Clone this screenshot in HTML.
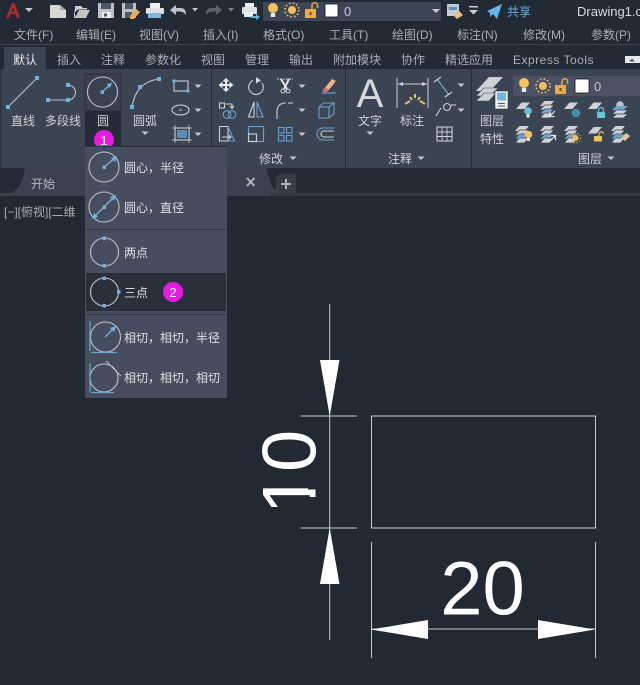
<!DOCTYPE html>
<html><head><meta charset="utf-8"><style>
html,body{margin:0;padding:0;background:#222933;width:640px;height:685px;overflow:hidden}
svg{display:block}
text{font-family:"Liberation Sans","Noto Sans CJK SC",sans-serif}
.m{font-size:12px;fill:#a9afb9}
.t{font-size:12px;fill:#a9afb9}
.l{font-size:12px;fill:#d0d3d8}
.d{font-size:12px;fill:#dfe1e5}
.s{fill:#6fb2de}
.c{fill:none;stroke:#bfc3ca;stroke-width:1.1}
.b{fill:none;stroke:#6aa3cd;stroke-width:1.1}
.w{fill:none;stroke:#cfd2d7;stroke-width:1.1}
</style></head><body>
<svg width="640" height="685" viewBox="0 0 640 685" xmlns="http://www.w3.org/2000/svg">
<defs>
<g id="arr"><path d="M-3.500 -1.500H3.500L0 2Z" fill="#c4c8ce"/></g>
<g id="bulb"><circle cx="0" cy="-2" r="5" fill="#f4c35c"/><rect x="-2.200" y="3" width="4.400" height="4" fill="#e8e8e8"/></g>
<g id="sun"><circle r="4" fill="#f1be5d"/><circle r="7" fill="none" stroke="#f1be5d" stroke-width="1.600" stroke-dasharray="1.600 2.100"/></g>
<g id="lock"><rect x="-6" y="-2" width="11" height="9" fill="#eaaa45"/><path d="M1 -2V-5.500a2.800 2.800 0 0 1 5.600 0V-3" fill="none" stroke="#eaaa45" stroke-width="1.500"/><rect x="-1.500" y="1" width="2" height="3" fill="#5a5040"/></g>
<g id="sheet"><path d="M-7 3.500L-1.500 -3H7L1.500 3.500Z" fill="#cfd1d4"/></g>
<g id="stk"><path d="M-7 -3L-2.500 -8H7L2.500 -3Z" fill="#d2d4d7"/><path d="M-7 1L-2.500 -4H7L2.500 1Z" fill="#d2d4d7" stroke="#3b4453" stroke-width=".7"/><path d="M-7 5L-2.500 0H7L2.500 5Z" fill="#6fabd8" stroke="#3b4453" stroke-width=".7"/><path d="M-7 9L-2.500 4H7L2.500 9Z" fill="#d2d4d7" stroke="#3b4453" stroke-width=".7"/></g>
<g id="stkb"><path d="M-8 -3L-3.500 -7H8L3.500 -3Z" fill="#6fabd8"/><path d="M-8 1L-3.500 -3H8L3.500 1Z" fill="#d2d4d7" stroke="#3b4453" stroke-width=".7"/><path d="M-8 5L-3.500 1H8L3.500 5Z" fill="#d2d4d7" stroke="#3b4453" stroke-width=".7"/></g>
</defs>

<!-- top bars -->
<rect width="640" height="22" fill="#222a36"/>
<rect y="22" width="640" height="22" fill="#232a36"/>
<rect y="44" width="640" height="1.200" fill="#3b4350"/>
<rect y="45" width="640" height="24" fill="#222a36"/>

<!-- quick access -->
<path d="M6 18L12 3H14.500L20 18H17L15.500 14H10.500L9 18ZM11.500 11.500H14.500L13 7.500Z" fill="#aa2c2f"/>
<path d="M25 8H33L29 12Z" fill="#c4c8ce"/>
<path d="M50 5H60L66 10V18H50Z" fill="#d8d8d2"/><path d="M60 5V10H66" fill="#a9a9a4"/>
<path d="M74 8V18H86L90 10H79L75.500 17" fill="#c6c6c0"/><path d="M75 10V6H81L83 8H87V9.500H78L75 12Z" fill="#cfcfca"/>
<path d="M98 3H114V18H98Z" fill="#bcc2c8"/><rect x="101" y="3" width="10" height="6" fill="#4f5765"/><rect x="102" y="12" width="9" height="6" fill="#eceded"/><rect x="104" y="13.500" width="3" height="3" fill="#555"/>
<path d="M122 3H136V18H122Z" fill="#bcc2c8"/><rect x="125" y="3" width="8" height="6" fill="#4f5765"/><rect x="125" y="12" width="7" height="6" fill="#4f5765"/><path d="M130 16L136 9L140 12L134 19H130Z" fill="#e9b05a"/>
<rect x="150" y="3" width="10" height="6" fill="#f0f0f0"/><rect x="146" y="8" width="18" height="6" rx="1" fill="#dfe0e2"/><rect x="148" y="13" width="13" height="5" fill="#7ab8e2"/>
<path d="M170 10L176 5V8H181Q186 8 186 15Q183 11 179 11.500H176V15Z" fill="#bfc2c7"/>
<path d="M192 8H198L195 11.500Z" fill="#bfc2c7"/>
<path d="M222 10L216 5V8H211Q206 8 206 15Q209 11 213 11.500H216V15Z" fill="#5b626e"/>
<path d="M228 8H234L231 11.500Z" fill="#7d838d"/>
<rect x="245" y="3" width="9" height="5" fill="#eee"/><rect x="242" y="7" width="15" height="7" rx="1" fill="#dfe0e2"/><rect x="244" y="12" width="9" height="5" fill="#eee"/><path d="M250 16H256V14L260 17L256 20V18H250Z" fill="#6fb2de"/>

<!-- layer combo top -->
<rect x="263" y="2" width="178" height="19" fill="#3d4657"/>
<use href="#bulb" x="273" y="10"/>
<use href="#sun" x="292" y="10"/>
<use href="#lock" x="311" y="11"/>
<rect x="325" y="4" width="13" height="13" fill="#fff" stroke="#111" stroke-width=".8"/>
<text x="344" y="16" font-size="13" fill="#c4c8ce">0</text>
<path d="M432 9H440L436 13Z" fill="#c9cdd2"/>

<rect x="447" y="4" width="12" height="12" fill="#c5cbd2"/><rect x="449" y="7" width="8" height="3" fill="#5b8db5"/><path d="M453 15L459 11L463 15L457 19Z" fill="#ecc37c"/>
<rect x="469" y="6" width="9" height="1.500" fill="#c9cdd2"/><path d="M469 10H478L473.500 14.500Z" fill="#c9cdd2"/>
<path d="M487 11L502 4L497 19L493 14L490 17V13Z" fill="#67b4e8"/>
<text x="507" y="16" font-size="12" fill="#67b4e8">共享</text>
<text x="577" y="16" font-size="13" fill="#d8dade">Drawing1.c</text>

<!-- menu -->
<text class="m" x="14" y="39">文件(F)</text>
<text class="m" x="76" y="39">编辑(E)</text>
<text class="m" x="139" y="39">视图(V)</text>
<text class="m" x="203" y="39">插入(I)</text>
<text class="m" x="263" y="39">格式(O)</text>
<text class="m" x="329" y="39">工具(T)</text>
<text class="m" x="392" y="39">绘图(D)</text>
<text class="m" x="457" y="39">标注(N)</text>
<text class="m" x="523" y="39">修改(M)</text>
<text class="m" x="591" y="39">参数(P)</text>

<!-- ribbon tabs -->
<rect x="4" y="47" width="42" height="23" fill="#3b4453"/>
<text x="13" y="64" font-size="12" fill="#e8eaed">默认</text>
<text class="t" x="57" y="64">插入</text>
<text class="t" x="101" y="64">注释</text>
<text class="t" x="145" y="64">参数化</text>
<text class="t" x="201" y="64">视图</text>
<text class="t" x="245" y="64">管理</text>
<text class="t" x="289" y="64">输出</text>
<text class="t" x="333" y="64">附加模块</text>
<text class="t" x="401" y="64">协作</text>
<text class="t" x="445" y="64">精选应用</text>
<text class="t" x="513" y="64" letter-spacing=".5">Express Tools</text>
<rect x="625" y="56" width="15" height="7" fill="#e8e8e8"/><path d="M629 61.500L632 58.500L635 61.500Z" fill="#555"/>

<!-- ribbon -->
<rect x="0" y="69" width="640" height="99" fill="#3b4453"/>
<rect x="0" y="69" width="1.500" height="99" fill="#2a313c"/>
<rect x="211" y="69" width="1" height="99" fill="#272e39"/>
<rect x="345" y="69" width="1" height="99" fill="#272e39"/>
<rect x="471" y="69" width="1" height="99" fill="#272e39"/>

<!-- line -->
<path d="M8 107L37 78" class="c"/><rect x="6" y="105" width="4" height="4" class="s"/><rect x="35" y="76" width="4" height="4" class="s"/>
<text class="l" x="11" y="125">直线</text>
<!-- polyline -->
<path d="M48 100H68A7.500 7.500 0 0 0 68 85" class="c"/>
<rect x="46" y="98" width="4" height="4" class="s"/><rect x="66" y="98" width="4" height="4" class="s"/><rect x="66" y="83" width="4" height="4" class="s"/>
<text class="l" x="45" y="125">多段线</text>
<!-- circle active -->
<rect x="85" y="74" width="36" height="37" fill="#39414f" stroke="#2a303b"/>
<rect x="85" y="111" width="36" height="36" fill="#262c37"/>
<circle cx="102.500" cy="92" r="15" class="c"/>
<path d="M102 92L111 84" stroke="#74b4e0" stroke-width="1.300"/><path d="M112 82.500L106.500 84.500L110 88Z" fill="#74b4e0"/><rect x="100.500" y="90.500" width="3.500" height="3.500" class="s"/>
<text class="l" x="97" y="125">圆</text>
<circle cx="104" cy="140" r="10" fill="#e61ae0"/>
<text x="104" y="145" font-size="13" fill="#fff" text-anchor="middle">1</text>
<!-- arc -->
<path d="M132 107Q136 82 159 79" class="c"/>
<rect x="130" y="105" width="4" height="4" class="s"/><rect x="138" y="85" width="4" height="4" class="s"/><rect x="157" y="77" width="4" height="4" class="s"/>
<text class="l" x="133" y="125">圆弧</text>
<use href="#arr" x="145" y="133"/>
<!-- rect, ellipse, hatch -->
<rect x="174" y="81" width="14" height="10" class="w"/><rect x="172.500" y="79.500" width="3" height="3" class="s"/><rect x="186.500" y="89.500" width="3" height="3" class="s"/>
<use href="#arr" x="198" y="86"/>
<ellipse cx="180.500" cy="110" rx="8.500" ry="5" class="w"/><rect x="179.500" y="109" width="2" height="2" class="s"/>
<use href="#arr" x="198" y="110"/>
<rect x="175" y="128" width="14" height="12" class="w"/><rect x="177" y="130" width="10" height="8" fill="#5f8cb3"/>
<path d="M172 128H192M172 140H192M175 125V143M189 125V143" stroke="#cfd2d7" stroke-width=".8"/>
<use href="#arr" x="198" y="134"/>

<!-- modify -->
<path d="M226 78L229.500 81.500H227V84H229.500V81.800L233.500 85L229.500 88.200V86H227V88.500H229.500L226 92L222.500 88.500H225V86H222.500V88.200L218.500 85L222.500 81.800V84H225V81.500H222.500Z" fill="#e9eaec"/>
<path d="M253 80.500A7.300 7.300 0 1 0 262 83" class="w"/><path d="M256 77L261 80.500L256 83.500Z" fill="#d5d8dc"/>
<path d="M277 79H293" stroke="#cfd2d7" stroke-dasharray="2 1"/><path d="M281 79L287 89M289 79L284 89" stroke="#e2e4e6" stroke-width="2"/><circle cx="283" cy="91" r="2" class="w"/><circle cx="288" cy="91" r="2" class="w"/>
<use href="#arr" x="302" y="86"/>
<path d="M324 89L332 79L336 81L328 91Z" fill="#e9b889"/><path d="M322 91L325 87L329 90L326 92.500Z" fill="#d96a72"/><path d="M322 93H336" stroke="#70b4de"/>

<rect x="219.500" y="103" width="5" height="5" class="w"/><path d="M226 104H232V108M230 106L232 108.500L234 106" class="w"/><circle cx="227" cy="114.500" r="3.800" class="b"/><circle cx="232" cy="114.500" r="3.800" class="b"/>
<path d="M254 102V117H248.500Z" class="w"/><path d="M257 102L263 117H257Z" class="b"/>
<path d="M277 119V112Q277 103 286 103" class="w"/><path d="M288 103H293" class="w"/>
<use href="#arr" x="302" y="110"/>
<path d="M319 107H329V118H319ZM319 107L323.500 103H334V113.500L329 118M329 107L334 103" class="b"/>

<path d="M219.500 126.500H228V141H219.500Z" class="w"/><path d="M228 126.500L234.500 141H228" class="b"/><path d="M222 137H231M229 135L231 137L229 139" class="w"/>
<rect x="248.500" y="126.500" width="15" height="15" class="b"/><rect x="248.500" y="134" width="8" height="7.500" class="w"/>
<rect x="278.500" y="127.500" width="5.500" height="5.500" class="b"/><rect x="286.500" y="127.500" width="5.500" height="5.500" class="b"/><rect x="278.500" y="135.500" width="5.500" height="5.500" class="b"/><rect x="286.500" y="135.500" width="5.500" height="5.500" class="b"/>
<use href="#arr" x="302" y="134"/>
<path d="M334 128H323A6 6 0 0 0 323 140H334" class="b"/><path d="M334 131H324A3 3 0 0 0 324 137H334" class="w"/>

<text class="l" x="259" y="163">修改</text><use href="#arr" x="293" y="158"/>

<!-- annotation -->
<text x="370" y="107" font-size="40" fill="#d7d9dc" text-anchor="middle">A</text>
<text class="l" x="358" y="125">文字</text><use href="#arr" x="370" y="133"/>
<path d="M397 78V108M428 78V108M398 84H427" stroke="#cfd2d7"/>
<path d="M398 84L403 82V86ZM427 84L422 82V86Z" fill="#cfd2d7"/>
<path d="M405 104L410 101M420 101L425 104M410 97L412 100M420 97L418 100M415 94V98" stroke="#e5c168" stroke-width="2"/>
<text class="l" x="400" y="125">标注</text>
<path d="M437 79L449 95" stroke="#8ab9da"/><path d="M434 82L441 77M445 97L452 92" class="w"/>
<use href="#arr" x="461" y="85"/>
<path d="M436 116L441 108" class="w"/><circle cx="447" cy="107" r="3.500" class="w"/><path d="M451 105H456" class="w"/>
<use href="#arr" x="461" y="110"/>
<rect x="437" y="127" width="15" height="14" class="w"/><path d="M437 132H452M437 136.500H452M442 127V141M447 127V141" stroke="#cfd2d7" stroke-width=".9"/>

<text class="l" x="388" y="163">注释</text><use href="#arr" x="421" y="158"/>

<!-- layers -->
<path d="M476 91L489 77H503L490 91Z" fill="#cfd1d4"/>
<path d="M476 96L484 88H498L490 96Z" fill="#cfd1d4" stroke="#3b4453" stroke-width=".6"/>
<path d="M476 101L484 93H496L489 101Z" fill="#cfd1d4" stroke="#3b4453" stroke-width=".6"/>
<rect x="495" y="91" width="13" height="18" fill="#eef0f2" stroke="#2a303b" stroke-width=".5"/><rect x="497" y="92.500" width="9" height="8" fill="#6fb5e6"/>
<path d="M498 103.500H505M498 106H505" stroke="#555" stroke-width=".9"/>
<text class="l" x="480" y="125">图层</text>
<text class="l" x="480" y="143">特性</text>

<rect x="513" y="76" width="127" height="20" fill="#4a5263"/>
<use href="#bulb" x="524" y="85"/>
<use href="#sun" x="543" y="86"/>
<use href="#lock" x="561" y="87"/>
<rect x="575" y="79" width="14" height="14" fill="#fff" stroke="#111" stroke-width=".8"/>
<text x="594" y="91" font-size="13" fill="#c4c8ce">0</text>

<!-- layer row 1 -->
<use href="#sheet" x="523" y="105.500"/><circle cx="528" cy="111" r="3.800" fill="#63c4da"/><rect x="526.500" y="114.500" width="3" height="3" fill="#eee"/>
<use href="#stk" x="547" y="109"/><path d="M550 116L555 111M550 112V116.500H554.500" stroke="#e8e8e8" fill="none" stroke-width="1.200"/>
<use href="#sheet" x="571" y="105.500"/><circle cx="576" cy="113" r="4" fill="#4a9fb8"/><path d="M572 113H580M576 109V117M573 110L579 116M579 110L573 116" stroke="#2f7a92" stroke-width=".6"/>
<use href="#sheet" x="595" y="105.500"/><rect x="597" y="112" width="8" height="6" fill="#63c4da"/><path d="M598.500 112V110A2.500 2.500 0 0 1 603.500 110V112" fill="none" stroke="#63c4da" stroke-width="1.200"/>
<circle cx="620" cy="105" r="3.800" fill="#bfc3c9"/><use href="#stkb" x="620" y="113"/>

<!-- layer row 2 -->
<use href="#stk" x="522" y="134"/><circle cx="528.500" cy="134.500" r="3.800" fill="#f4c35c"/><rect x="527" y="138" width="3" height="3" fill="#eee"/>
<use href="#stk" x="547" y="134"/><path d="M550 141L555 136M551 135.500H555.500V140" stroke="#e8e8e8" fill="none" stroke-width="1.200"/>
<use href="#stk" x="571" y="134"/><circle cx="575.500" cy="138" r="3" fill="#f1be5d"/><circle cx="575.500" cy="138" r="5" fill="none" stroke="#f1be5d" stroke-dasharray="1.200 1.600"/>
<use href="#sheet" x="595" y="130"/><rect x="594" y="136" width="8" height="5.500" fill="#eec354"/><path d="M599 136V134A2.200 2.200 0 0 1 603.500 134" fill="none" stroke="#eec354" stroke-width="1.200"/>
<use href="#stk" x="618" y="134"/><path d="M621 138L626 133L630 136L625 141Z" fill="#eac79a"/>

<text class="l" x="578" y="163">图层</text><use href="#arr" x="611" y="158"/>

<!-- doc tabs -->
<rect y="168" width="640" height="28" fill="#3a414f"/>
<rect x="270" y="193" width="370" height="3" fill="#333a47"/>
<path d="M0 168H25Q22 188 12 193H0Z" fill="#252b36"/>
<path d="M266 168H640V193H284Q272 193 270 180Z" fill="#252b36"/>
<path d="M276 193V180Q276 174 282 174H296V193Z" fill="#363d4a"/>
<text x="31" y="188" font-size="12" fill="#b4b8bf">开始</text>
<path d="M247 178L254.500 186M254.500 178L247 186" stroke="#b0b4bb" stroke-width="2"/>
<path d="M281 184H291M286 179V189" stroke="#b0b4bb" stroke-width="2"/>

<text x="4" y="216" font-size="12" fill="#a8acb2">[−][俯视][二维</text>

<!-- dropdown -->
<rect x="85" y="146" width="142" height="252" fill="#464d5e"/>
<rect x="85" y="146" width="142" height="1" fill="#2b313c"/>
<rect x="86" y="229" width="140" height="1" fill="#303643"/>
<rect x="86" y="273" width="140" height="38" fill="#2a303b"/>
<rect x="86" y="314" width="140" height="1" fill="#303643"/>

<circle cx="104" cy="167" r="15" class="c"/><path d="M104 167L115 158" stroke="#74b4e0" stroke-width="1.300"/><path d="M117 156L111 158L115 162Z" fill="#74b4e0"/><rect x="102.500" y="165.500" width="3.500" height="3.500" class="s"/>
<text class="d" x="124" y="172">圆心，半径</text>
<circle cx="104" cy="207" r="15" class="c"/><path d="M94 217L114 197" stroke="#74b4e0" stroke-width="1.300"/><path d="M116 195L110 197L114 201ZM92 219L98 217L94 213Z" fill="#74b4e0"/><rect x="102.500" y="205.500" width="3.500" height="3.500" class="s"/>
<text class="d" x="124" y="212">圆心，直径</text>
<circle cx="104.500" cy="252" r="14" class="c"/><rect x="102.500" y="236.500" width="3.500" height="3.500" class="s"/><rect x="102.500" y="264" width="3.500" height="3.500" class="s"/>
<text class="d" x="124" y="257">两点</text>
<circle cx="104.500" cy="292" r="14" class="c"/><rect x="102.500" y="276.500" width="3.500" height="3.500" class="s"/><rect x="102.500" y="304" width="3.500" height="3.500" class="s"/><rect x="117" y="290" width="3.500" height="3.500" class="s"/>
<text class="d" x="124" y="297">三点</text>
<circle cx="173" cy="292" r="10" fill="#e61ae0"/>
<text x="173" y="297" font-size="13" fill="#fff" text-anchor="middle">2</text>
<circle cx="105.500" cy="337" r="15" class="c"/><path d="M90 321V351M91 352.500H117" stroke="#6fa8d2" stroke-width="1.200"/><path d="M105 337L114 328" stroke="#74b4e0" stroke-width="1.300"/><path d="M116 326L110 328L114 332Z" fill="#74b4e0"/>
<text class="d" x="124" y="342">相切，相切，半径</text>
<circle cx="104" cy="378" r="14" class="c"/><path d="M90 363V392M91 392.500H114" stroke="#6fa8d2" stroke-width="1.200"/><path d="M106 361L121 376" class="c"/>
<text class="d" x="124" y="382">相切，相切，相切</text>

<!-- drawing -->
<g stroke="#c8cacc" stroke-width="1" fill="none">
<rect x="371.500" y="416" width="224" height="112"/>
<path d="M329.700 304V640M301 416H357M301 528H357M371.500 542V658M595.500 542V658M371 629H595"/>
</g>
<path d="M320 360H339.500L329.700 416ZM320 584H339.500L329.700 528ZM428 620V639L371 629.500ZM538 620V639L595 629.500Z" fill="#fff"/>
<text x="482.500" y="614.500" font-size="76" fill="#fff" text-anchor="middle">20</text>
<text transform="translate(315.500,472) rotate(-90)" font-size="76" fill="#fff" text-anchor="middle">10</text>
<rect x="308" y="472.500" width="10" height="17" fill="#222933"/>
<rect x="308" y="497" width="10" height="17" fill="#222933"/>
</svg>
</body></html>
